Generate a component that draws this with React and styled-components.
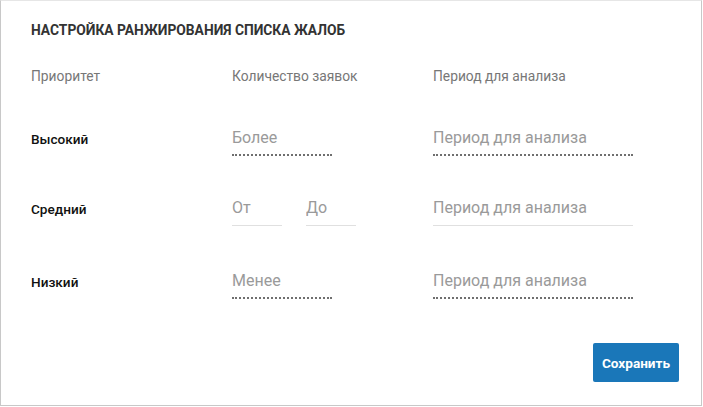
import React from "react";
import styled, { createGlobalStyle } from "styled-components";

const Global = createGlobalStyle`
  html, body { margin: 0; padding: 0; background: #fff; }
  body { font-family: Roboto, "Noto Sans", sans-serif; }
  * { box-sizing: border-box; }
`;

const Card = styled.div`
  width: 702px;
  height: 406px;
  border: 1px solid #c8c8c8;
  border-top-color: #e6e6e6;
  background: #fff;
  padding: 20px 22px 0 30px;
  display: flex;
  flex-direction: column;
`;

const Title = styled.h2`
  margin: 0;
  font-size: 13.8px;
  font-weight: 700;
  color: #333;
  text-transform: uppercase;
  line-height: 18px;
`;

const Grid = styled.div`
  margin-top: 28px;
  display: grid;
  grid-template-columns: 201px 201px 200px;
`;

const HeadCell = styled.div`
  font-size: 13.8px;
  color: #777;
  line-height: 18px;
`;

const Label = styled.div`
  font-size: 13.6px;
  font-weight: 500;
  color: #111;
  display: flex;
  align-items: center;
  height: 26px;
`;

const Row = styled.div`
  display: contents;
`;

const Cell = styled.div`
  display: flex;
  gap: 24px;
  margin-top: ${(p) => p.$mt}px;
`;

const Field = styled.input`
  width: ${(p) => p.$w}px;
  height: 30px;
  border: none;
  border-bottom: ${(p) => (p.$dotted ? "2px dotted #6f6f6f" : "1px solid #e0e0e0")};
  padding: 0 0 ${(p) => (p.$dotted ? "5px" : "6px")} 0;
  font-family: Roboto, "Noto Sans", sans-serif;
  font-size: 16px;
  color: #333;
  outline: none;
  background: transparent;
  &::placeholder { color: #9a9a9a; }
`;

const LabelCell = styled.div`
  margin-top: ${(p) => p.$mt}px;
  display: flex;
  align-items: flex-start;
`;

const Footer = styled.div`
  margin-top: auto;
  display: flex;
  justify-content: flex-end;
  padding-bottom: 23px;
`;

const Button = styled.button`
  width: 86px;
  height: 39px;
  border: none;
  border-radius: 2px;
  background: #1a77b9;
  color: #fff;
  font-family: Roboto, "Noto Sans", sans-serif;
  font-size: 13.6px;
  font-weight: 700;
  cursor: pointer;
`;

const rows = [
  { label: "Высокий", mt: 41, count: [{ ph: "Более", w: 100, dotted: true }], dotted: true },
  { label: "Средний", mt: 40, count: [{ ph: "От", w: 50 }, { ph: "До", w: 50 }], dotted: false },
  { label: "Низкий", mt: 43, count: [{ ph: "Менее", w: 100, dotted: true }], dotted: true },
];

export default function App() {
  return (
    <>
      <Global />
      <Card>
        <Title>Настройка ранжирования списка жалоб</Title>
        <Grid>
          <HeadCell>Приоритет</HeadCell>
          <HeadCell>Количество заявок</HeadCell>
          <HeadCell>Период для анализа</HeadCell>
          {rows.map((r) => (
            <Row key={r.label}>
              <LabelCell $mt={r.mt}>
                <Label>{r.label}</Label>
              </LabelCell>
              <Cell $mt={r.mt}>
                {r.count.map((c) => (
                  <Field key={c.ph} placeholder={c.ph} $w={c.w} $dotted={c.dotted} />
                ))}
              </Cell>
              <Cell $mt={r.mt}>
                <Field placeholder="Период для анализа" $w={200} $dotted={r.dotted} />
              </Cell>
            </Row>
          ))}
        </Grid>
        <Footer>
          <Button>Сохранить</Button>
        </Footer>
      </Card>
    </>
  );
}
